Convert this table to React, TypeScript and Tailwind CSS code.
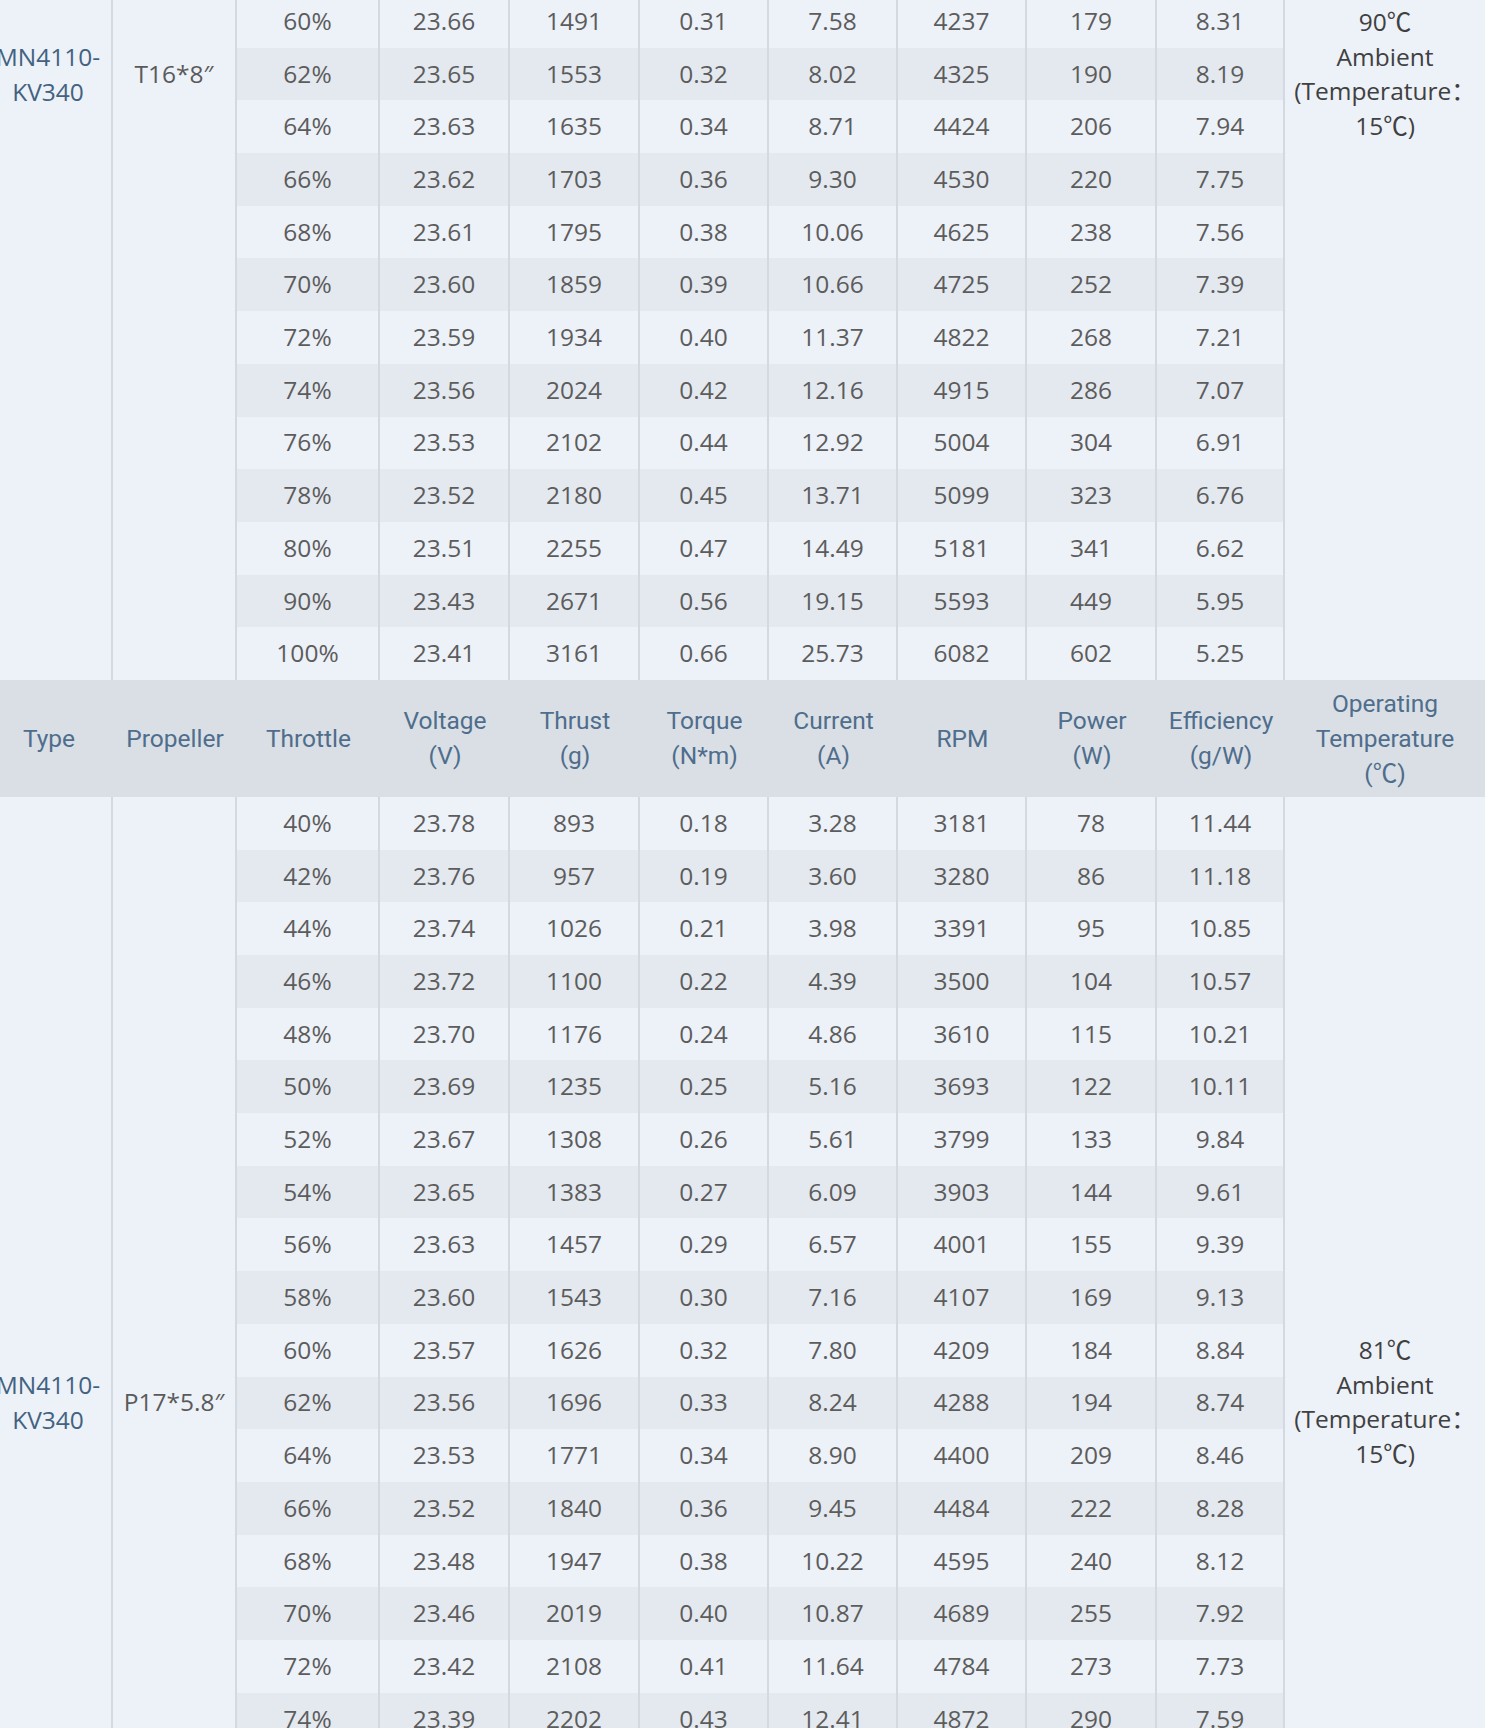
import React from "react";

type Row = [string, string, string, string, string, string, string, string];

const upper: Row[] = [
  ["60%", "23.66", "1491", "0.31", "7.58", "4237", "179", "8.31"],
  ["62%", "23.65", "1553", "0.32", "8.02", "4325", "190", "8.19"],
  ["64%", "23.63", "1635", "0.34", "8.71", "4424", "206", "7.94"],
  ["66%", "23.62", "1703", "0.36", "9.30", "4530", "220", "7.75"],
  ["68%", "23.61", "1795", "0.38", "10.06", "4625", "238", "7.56"],
  ["70%", "23.60", "1859", "0.39", "10.66", "4725", "252", "7.39"],
  ["72%", "23.59", "1934", "0.40", "11.37", "4822", "268", "7.21"],
  ["74%", "23.56", "2024", "0.42", "12.16", "4915", "286", "7.07"],
  ["76%", "23.53", "2102", "0.44", "12.92", "5004", "304", "6.91"],
  ["78%", "23.52", "2180", "0.45", "13.71", "5099", "323", "6.76"],
  ["80%", "23.51", "2255", "0.47", "14.49", "5181", "341", "6.62"],
  ["90%", "23.43", "2671", "0.56", "19.15", "5593", "449", "5.95"],
  ["100%", "23.41", "3161", "0.66", "25.73", "6082", "602", "5.25"],
];

const lower: Row[] = [
  ["40%", "23.78", "893", "0.18", "3.28", "3181", "78", "11.44"],
  ["42%", "23.76", "957", "0.19", "3.60", "3280", "86", "11.18"],
  ["44%", "23.74", "1026", "0.21", "3.98", "3391", "95", "10.85"],
  ["46%", "23.72", "1100", "0.22", "4.39", "3500", "104", "10.57"],
  ["48%", "23.70", "1176", "0.24", "4.86", "3610", "115", "10.21"],
  ["50%", "23.69", "1235", "0.25", "5.16", "3693", "122", "10.11"],
  ["52%", "23.67", "1308", "0.26", "5.61", "3799", "133", "9.84"],
  ["54%", "23.65", "1383", "0.27", "6.09", "3903", "144", "9.61"],
  ["56%", "23.63", "1457", "0.29", "6.57", "4001", "155", "9.39"],
  ["58%", "23.60", "1543", "0.30", "7.16", "4107", "169", "9.13"],
  ["60%", "23.57", "1626", "0.32", "7.80", "4209", "184", "8.84"],
  ["62%", "23.56", "1696", "0.33", "8.24", "4288", "194", "8.74"],
  ["64%", "23.53", "1771", "0.34", "8.90", "4400", "209", "8.46"],
  ["66%", "23.52", "1840", "0.36", "9.45", "4484", "222", "8.28"],
  ["68%", "23.48", "1947", "0.38", "10.22", "4595", "240", "8.12"],
  ["70%", "23.46", "2019", "0.40", "10.87", "4689", "255", "7.92"],
  ["72%", "23.42", "2108", "0.41", "11.64", "4784", "273", "7.73"],
  ["74%", "23.39", "2202", "0.43", "12.41", "4872", "290", "7.59"],
];

const colWidths = [128, 124, 143, 130, 130, 129, 129, 129, 130, 128, 200];

const line = "border-r-2 border-[#d3d9e0]";

function HeaderRow() {
  const heads: React.ReactNode[] = [
    "Type",
    "Propeller",
    "Throttle",
    <>Voltage<br />(V)</>,
    <>Thrust<br />(g)</>,
    <>Torque<br />(N*m)</>,
    <>Current<br />(A)</>,
    "RPM",
    <>Power<br />(W)</>,
    <>Efficiency<br />(g/W)</>,
    <>Operating<br />Temperature<br />(℃)</>,
  ];
  return (
    <tr className="h-[117px] bg-[#d9dfe5]">
      {heads.map((h, i) => (
        <th
          key={i}
          className="p-0 text-center align-middle font-normal text-[24.5px] leading-[35px] text-[#4f6d8c] font-['Roboto','Noto_Sans_CJK_SC',sans-serif]"
        >
          {h}
        </th>
      ))}
    </tr>
  );
}

function Block({
  rows,
  type,
  prop,
  temp,
  typePad,
  propPad,
  tempPad,
}: {
  rows: Row[];
  type: string;
  prop: string;
  temp: string;
  typePad: string;
  propPad: string;
  tempPad: string;
}) {
  return (
    <>
      {rows.map((r, i) => (
        <tr key={r[0]} className="h-[52.7px]">
          {i === 0 && (
            <>
              <td
                rowSpan={rows.length}
                className={`${line} ${typePad} bg-[#edf1f8] px-1 text-center align-top text-[#42627f]`}
              >
                {type}
              </td>
              <td
                rowSpan={rows.length}
                className={`${line} ${propPad} bg-[#edf1f8] px-1 text-center align-top text-[#5a5a5a]`}
              >
                {prop}
              </td>
            </>
          )}
          {r.map((v, j) => (
            <td
              key={j}
              className={`${line} p-0 text-center align-middle text-[#5c5c5c] ${
                i % 2 === 0 ? "bg-[#edf1f8]" : "bg-[#e4e9f0]"
              }`}
            >
              {v}
            </td>
          ))}
          {i === 0 && (
            <td
              rowSpan={rows.length}
              className={`${tempPad} bg-[#edf1f8] px-1 text-center align-top text-[#404040]`}
            >
              {temp}
              <br />
              Ambient
              <br />
              (Temperature：
              <br />
              15℃)
            </td>
          )}
        </tr>
      ))}
    </>
  );
}

export default function App() {
  return (
    <div className="h-[1728px] w-[1500px] overflow-hidden bg-white">
      <table className="-mt-[5px] -ml-[15px] w-[1500px] table-fixed border-separate border-spacing-0 font-['Open_Sans','Noto_Sans_CJK_SC',sans-serif] text-[24.5px] leading-[34.7px]">
        <colgroup>
          {colWidths.map((w, i) => (
            <col key={i} style={{ width: w }} />
          ))}
        </colgroup>
        <tbody>
          <Block
            rows={upper}
            type="MN4110-KV340"
            prop="T16*8″"
            temp="90℃"
            typePad="pt-[45px]"
            propPad="pt-[62px]"
            tempPad="pt-[10px]"
          />
          <HeaderRow />
          <Block
            rows={lower}
            type="MN4110-KV340"
            prop="P17*5.8″"
            temp="81℃"
            typePad="pt-[571px]"
            propPad="pt-[588px]"
            tempPad="pt-[536px]"
          />
        </tbody>
      </table>
    </div>
  );
}
